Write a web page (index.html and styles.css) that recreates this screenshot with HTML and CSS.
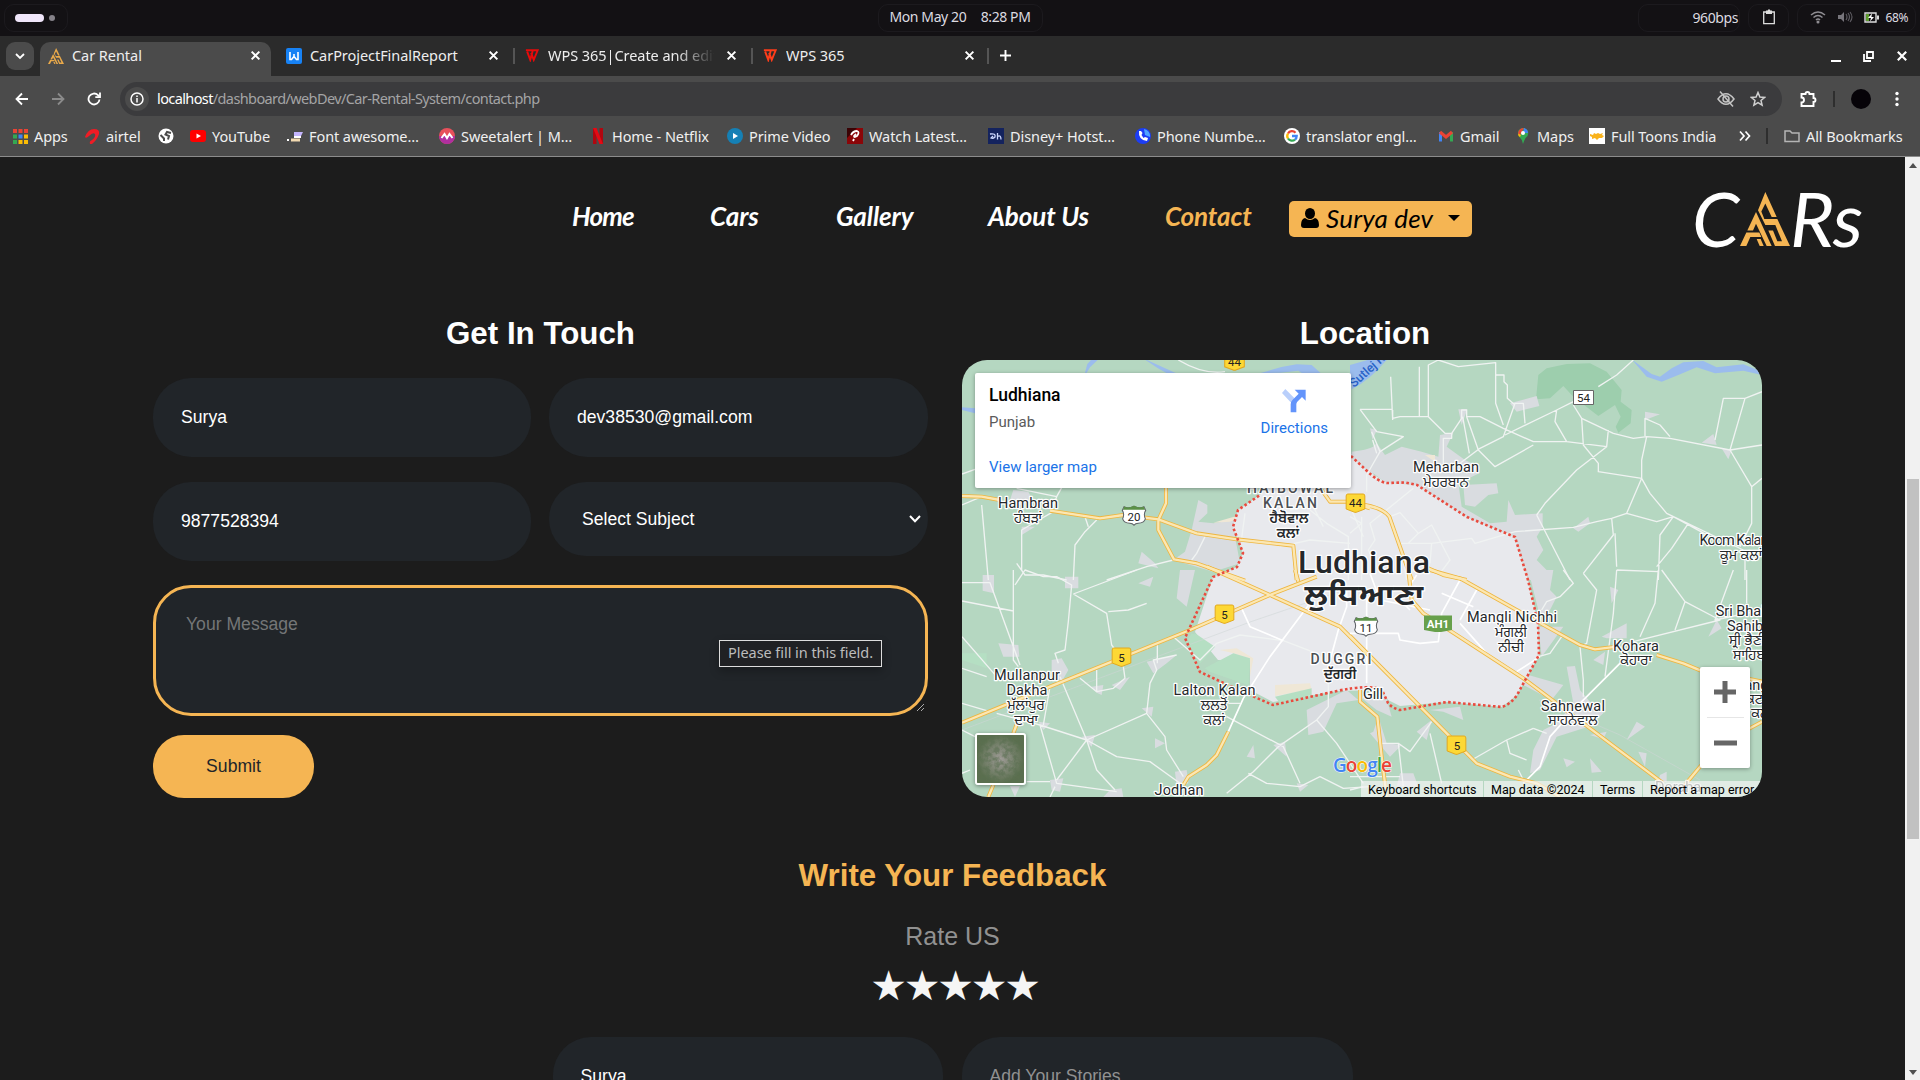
FILE: index.html
```html
<!DOCTYPE html>
<html lang="en">
<head>
<meta charset="utf-8">
<title>Car Rental</title>
<link rel="stylesheet" href="styles.css">
</head>
<body>
<svg class="defs" width="0" height="0">
  <defs>
    <symbol id="brand" viewBox="150 36 150 160" preserveAspectRatio="none">
      <path d="M226 36L260 110H245L226 70L214 94L223 116H262L300 196H255L235 150H249L262 182H276L256 134H226L204 90Z"/>
      <path d="M198 95L245 196H230L198 130L189 150H172Z"/>
      <path d="M169 156H208L214 169H181L169 196H150Z"/>
      <path d="M200 175H212L221 196H209Z"/>
    </symbol>
    <symbol id="x" viewBox="0 0 10 10"><path d="M1.5 1.5L8.5 8.5M8.5 1.5L1.5 8.5" fill="none" stroke="#fff" stroke-width="1.8"/></symbol>
    <symbol id="wps" viewBox="0 0 16 14"><path d="M1 1H9L6 12L2.5 2.5M7 4L10 12L14.5 1H10" fill="none" stroke="currentColor" stroke-width="2.2"/></symbol>
    <symbol id="us" viewBox="0 0 72 62"><path d="M8 8Q20 14 36 6Q52 14 64 8L69 18Q62 28 68 42Q64 54 48 54Q40 54 36 60Q32 54 24 54Q8 54 4 42Q10 28 3 18Z" fill="#fff" stroke="#5f6368" stroke-width="3"/><path d="M9 7Q20 13 36 5Q52 13 63 7L67 16H5Z" fill="#5b9147"/></symbol>
    <symbol id="nh" viewBox="0 0 60 60"><path d="M7 3H53Q58 3 58 9V48L32 58H28L2 48V9Q2 3 7 3Z" fill="#fdd835" stroke="#e2a81f" stroke-width="3"/></symbol>
  </defs>
</svg>

<header class="sysbar">
  <div class="pill work"><i class="dash"></i><i class="dot"></i></div>
  <div class="pill clock"><span>Mon May 20</span><span>8:28 PM</span></div>
  <div class="tray">
    <div class="pill net">960bps</div>
    <div class="pill clip"><svg width="14" height="16" viewBox="0 0 14 16"><path d="M1.7 3H12.3V14.7H1.7Z" fill="none" stroke="#ddd" stroke-width="1.3"/><path d="M4 1.5H5.5L7 0L8.5 1.5H10V5H4Z" fill="#ddd"/></svg></div>
    <div class="pill status">
      <svg width="16" height="14" viewBox="0 0 16 14" fill="none" stroke="#8f8d92" stroke-width="1.5"><path d="M1 5Q8-1 15 5M3.5 7.5Q8 3.5 12.5 7.5M6 10Q8 8 10 10"/><circle cx="8" cy="12" r=".8"/></svg>
      <svg width="16" height="14" viewBox="0 0 16 14"><path d="M1 5H4L7 2V12L4 9H1Z" fill="#77757b"/><path d="M9 4Q11 7 9 10M11 3Q14 7 11 11M13 2Q17 7 13 12" fill="none" stroke="#5f5d63" stroke-width="1.1"/></svg>
      <span class="batt"><svg width="15" height="11" viewBox="0 0 15 11"><path d="M1 1H12V10H1Z" fill="none" stroke="#ddd" stroke-width="1.4"/><path d="M13 3.5H15V7.5H13Z" fill="#ddd"/><path d="M2 2H5V9H2Z" fill="#5c9a2d"/><path d="M8 1.5L4 6H7L6 9.5L10 5H7.4Z" fill="#fff"/></svg>68%</span>
    </div>
  </div>
</header>

<div class="tabstrip">
  <span class="tabsearch"><svg width="10" height="7" viewBox="0 0 10 7"><path d="M1 1L5 5L9 1" fill="none" stroke="#fff" stroke-width="1.8"/></svg></span>
  <div class="tab active"><svg class="fav" fill="#e9a94a"><use href="#brand"/></svg><span class="title">Car Rental</span><svg class="close"><use href="#x"/></svg></div>
  <div class="tab"><svg class="fav" viewBox="0 0 16 16"><rect width="16" height="16" rx="2" fill="#1782f5"/><path d="M4 4V11.5H5.5L8 8.5L10.5 11.5H12V4M8 8V6" fill="none" stroke="#fff" stroke-width="1.6"/></svg><span class="title">CarProjectFinalReport</span><svg class="close"><use href="#x"/></svg></div>
  <div class="tab sep"><svg class="fav wps red"><use href="#wps"/></svg><span class="title fade">WPS 365|Create and edit</span><svg class="close"><use href="#x"/></svg></div>
  <div class="tab sep"><svg class="fav wps orange"><use href="#wps"/></svg><span class="title">WPS 365</span><svg class="close"><use href="#x"/></svg></div>
  <div class="newtab"><svg width="11" height="11" viewBox="0 0 11 11"><path d="M5.5 0V11M0 5.5H11" stroke="#fff" stroke-width="1.9"/></svg></div>
  <div class="winctl">
    <svg width="10" height="12" viewBox="0 0 10 12"><path d="M0 11H10" stroke="#fff" stroke-width="2"/></svg>
    <svg width="11" height="11" viewBox="0 0 11 11" fill="none" stroke="#fff" stroke-width="1.8"><path d="M4 1H10V7H4Z"/><path d="M1 3V10H8"/></svg>
    <svg width="12" height="12"><use href="#x"/></svg>
  </div>
</div>

<div class="toolbar">
  <svg width="14" height="14" viewBox="0 0 14 14" fill="none" stroke="#fff" stroke-width="1.8"><path d="M13 7H2M7 1.5L1.5 7L7 12.5"/></svg>
  <svg width="14" height="14" viewBox="0 0 14 14" fill="none" stroke="#8b8b8b" stroke-width="1.8"><path d="M1 7H12M7 1.5L12.500 7L7 12.500"/></svg>
  <svg width="14" height="14" viewBox="0 0 14 14" fill="none" stroke="#fff" stroke-width="1.8"><path d="M12.500 7.500A5.500 5.500 0 1 1 11 3.200L12 4.500"/><path d="M13 .5V5.200H8.300"/></svg>
  <div class="omnibox">
    <span class="info"><svg width="14" height="14" viewBox="0 0 14 14"><circle cx="7" cy="7" r="6" fill="none" stroke="#fff" stroke-width="1.5"/><path d="M7 6V10.500M7 3.400V5" stroke="#fff" stroke-width="1.500"/></svg></span>
    <span class="url">localhost<em>/dashboard/webDev/Car-Rental-System/contact.php</em></span>
    <svg class="eye" width="18" height="16" viewBox="0 0 18 16" fill="none" stroke="#c4c4c4" stroke-width="1.500"><path d="M1 8Q9-2.500 17 8Q9 18.500 1 8Z"/><circle cx="9" cy="8" r="3"/><path d="M3 .5L16 15.500"/></svg>
    <svg class="star" width="16" height="16" viewBox="0 0 16 16"><path d="M8 1.500L9.900 6L14.700 6.400L11 9.500L12.100 14.200L8 11.700L3.900 14.200L5 9.500L1.300 6.400L6.100 6Z" fill="none" stroke="#d0d0d0" stroke-width="1.500"/></svg>
  </div>
  <svg class="puzzle" width="17" height="18" viewBox="0 0 17 18"><path d="M1.500 4H5.500A2 2 0 0 1 9.500 4H13.500V8A2 2 0 0 1 13.500 12V16H1.500V12.500A2.500 2.500 0 0 0 1.500 7.500Z" fill="none" stroke="#fff" stroke-width="1.900"/></svg>
  <i class="bar"></i><i class="avatar"></i>
  <svg class="dots" width="4" height="16" viewBox="0 0 4 16" fill="#fff"><circle cx="2" cy="2.500" r="1.700"/><circle cx="2" cy="8" r="1.700"/><circle cx="2" cy="13.500" r="1.700"/></svg>
</div>

<nav class="bookmarks">
  <a><svg viewBox="0 0 16 16"><path d="M1 1h4v4H1zM6.500 1h4v4h-4zM12 1h4v4h-4z" fill="#ea4335"/><path d="M1 6.500h4v4H1zM1 12h4v4H1z" fill="#34a853"/><path d="M6.500 6.500h4v4h-4z" fill="#4285f4"/><path d="M12 6.500h4v4h-4zM6.500 12h4v4h-4zM12 12h4v4h-4z" fill="#fbbc05"/></svg>Apps</a>
  <a><svg viewBox="0 0 16 16"><path d="M1 9Q4 1 10 1Q16 1 15 6Q13 12 8 16H6Q5 13 8 12Q12 9 11 6Q9 4 5 8Q2 11 1 9Z" fill="#ee1c25"/></svg>airtel</a>
  <a><svg viewBox="0 0 16 16"><circle cx="8" cy="8" r="7.500" fill="#fff"/><path d="M2.500 7L6 10.500V13M13 5L9 4L7.500 6.500L11 8L10 11.500" fill="none" stroke="#4b4b4b" stroke-width="2"/></svg></a>
  <a><svg viewBox="0 0 16 16"><rect y="2" width="16" height="12" rx="3" fill="#f00"/><path d="M6.500 5.500L11 8L6.500 10.500Z" fill="#fff"/></svg>YouTube</a>
  <a><svg viewBox="0 0 16 16"><path d="M7 4H16L14 8H7Z" fill="#c4b5fd"/><path d="M7 8H14V10H7Z" fill="#fff"/><path d="M4 10.500H13V13.500H4Z" fill="#f1d9b0"/><path d="M0 11H2V13H0Z" fill="#fff"/></svg>Font awesome…</a>
  <a><svg viewBox="0 0 16 16"><circle cx="8" cy="8" r="8" fill="#e8505b"/><path d="M0 8A8 8 0 0 0 16 8Z" fill="#b02fa0"/><path d="M2.500 10L5.500 6L8 10L10.500 6L13.500 10" fill="none" stroke="#fff" stroke-width="2"/></svg>Sweetalert | M…</a>
  <a><svg class="narrow" viewBox="0 0 10 16"><path d="M0 0H3.500V16H0ZM6.500 0H10V16H6.500Z" fill="#b1060f"/><path d="M0 0H3.500L10 16H6.500Z" fill="#e50914"/></svg>Home - Netflix</a>
  <a><svg viewBox="0 0 16 16"><circle cx="8" cy="8" r="8" fill="#1580b5"/><path d="M6 5L11 8L6 11Z" fill="#fff"/></svg>Prime Video</a>
  <a><svg viewBox="0 0 16 16"><path d="M0 0H16V16H0Z" fill="#8b0508"/><path d="M0 0H10L0 10Z" fill="#3a0305"/><path d="M4 7Q6 3 10 3Q13 4 10 8Q7 10 7 8L9 6M7 11L6 13" fill="none" stroke="#fff" stroke-width="1.800"/></svg>Watch Latest…</a>
  <a><svg viewBox="0 0 16 16"><path d="M0 0H16V16H0Z" fill="#14235e"/><path d="M2 6Q8 5 7 9Q5 11 3 10L5 8M9.500 5V11.500M9.500 8.500Q13 6.500 13 11.500" fill="none" stroke="#cdd8ff" stroke-width="1.300"/></svg>Disney+ Hotst…</a>
  <a><svg viewBox="0 0 16 16"><circle cx="8" cy="8" r="8" fill="#1c3df5"/><path d="M9 1A7 7 0 0 1 15 9L10 7Z" fill="#4fa4ff"/><path d="M4 3Q3 12 12 13L13 10L10 9L8.500 10L6.500 7L7.500 5L6 3Z" fill="#fff"/></svg>Phone Numbe…</a>
  <a><svg viewBox="0 0 16 16"><circle cx="8" cy="8" r="8" fill="#fff"/><g fill="none" stroke-width="2.300"><path d="M4 5.500A4.700 4.700 0 0 1 11.500 4.700" stroke="#ea4335"/><path d="M4 5.500A4.700 4.700 0 0 0 4 10.500" stroke="#fbbc05"/><path d="M4 10.500A4.700 4.700 0 0 0 11 11.600" stroke="#34a853"/><path d="M8 8H12.700Q12.700 10.500 11 11.600" stroke="#4285f4"/></g></svg>translator engl…</a>
  <a><svg viewBox="0 0 16 16"><path d="M2.500 13.500V4" stroke="#4285f4" stroke-width="3"/><path d="M13.500 13.500V4" stroke="#34a853" stroke-width="3"/><path d="M2 4L8 9L14 4" fill="none" stroke="#ea4335" stroke-width="3.200"/></svg>Gmail</a>
  <a><svg viewBox="0 0 16 16"><path d="M8 16Q7 11 4 8.500Q1 3 6 .5Q10-1 13 3Q14 7 11 9.500Q9 12 8 16Z" fill="#34a853"/><path d="M3 5Q4 0 9 0L4.500 8Z" fill="#ea4335"/><path d="M9 0Q13 1 13 5L8 5Z" fill="#4285f4"/><path d="M3 5.500L6 7L5 9Q3 8 3 5.500Z" fill="#fbbc05"/><circle cx="8" cy="5" r="2" fill="#fff"/></svg>Maps</a>
  <a><svg viewBox="0 0 16 16"><path d="M0 0H16V16H0Z" fill="#fff"/><path d="M1 6L4 7L5 5L7 6L9 5L11 6L14 5L13 7L15 8L13 10L10 10L8 12L6 10L3 11L3 9L1 8Z" fill="#f9b21b"/></svg>Full Toons India</a>
  <a class="more"><svg viewBox="0 0 12 12"><path d="M1 1.500L5 6L1 10.500M6.500 1.500L10.500 6L6.500 10.500" fill="none" stroke="#fff" stroke-width="1.700"/></svg></a>
  <i class="bar"></i>
  <a><svg viewBox="0 0 16 16"><path d="M1 3H6L8 5H15V13.500H1Z" fill="none" stroke="#b5b5b5" stroke-width="1.500"/></svg>All Bookmarks</a>
</nav>

<main class="viewport">
  <div class="page">
    <div class="nav">
      <a>Home</a><a>Cars</a><a>Gallery</a><a>About Us</a><a class="current">Contact</a>
      <button class="user"><svg width="18" height="20" viewBox="0 0 18 20"><ellipse cx="9" cy="5.500" rx="5" ry="5.500"/><path d="M4 10Q9 14 14 10Q18 11 18 17Q18 20 15 20H3Q0 20 0 17Q0 11 4 10Z"/></svg><span>Surya dev</span><i class="caret"></i></button>
      <div class="logo"><span class="c">C</span><svg width="50" height="54" fill="#f5b553"><use href="#brand"/></svg><span class="rs">Rs</span></div>
    </div>

    <section class="contact">
      <div class="form">
        <h2>Get In Touch</h2>
        <div class="fields">
          <div class="field">Surya</div><div class="field">dev38530@gmail.com</div>
          <div class="field">9877528394</div>
          <div class="field select"><span>Select Subject</span><svg width="12" height="8" viewBox="0 0 12 8"><path d="M1 1L6 6.300L11 1" fill="none" stroke="#fff" stroke-width="2"/></svg></div>
        </div>
        <div class="message">Your Message
          <span class="tip">Please fill in this field.</span>
          <svg class="grip" width="7" height="7" viewBox="0 0 7 7"><path d="M0 7L7 0M4 7L7 4" stroke="#aaa"/></svg>
        </div>
        <button class="submit">Submit</button>
      </div>
      <div class="location">
        <h2>Location</h2>
        <div class="map">
          <svg class="canvas" width="800" height="437" viewBox="962 360 800 437">
            <rect x="962" y="360" width="800" height="437" fill="#b5d7c1"/>
            <g class="q0">
              <path class="river" d="M405 68L412 42L425 28H445L420 52L410 68ZM36 172L75 175V190L36 180ZM580 25L690 75H660Q620 55 580 25ZM930 70Q990 50 1040 43L1085 45L1115 72H1060L1045 62L990 68ZM1205 110L1200 72L1260 30H1310Q1260 90 1205 118Z"/>
              <path class="gray" d="M745 450L772 465V490L745 515L790 520L855 510V560L870 640L790 665L670 630L705 605L725 540ZM575 605L615 640L625 655L565 640ZM190 420L235 425L245 445L220 465H190L180 450ZM215 530H255L215 555ZM1205 305Q1250 300 1270 290V420H1205Z"/>
              <path class="sand" d="M790 518L860 498L880 470V500L840 515Z"/>
            </g>
            <g class="q1">
              <path class="river" d="M0 75L100 28H60L0 45ZM845 28L905 72L930 80L965 55L1000 37L1060 33L1100 52L1180 43L1236 65V75L1180 62L1095 70L1040 52L985 75L935 95L890 80Z"/>
              <path class="wood" d="M565 75L590 55L650 42L720 40L770 65L815 120L812 155L845 180L842 220L805 248L797 230L812 200L795 165L745 198L670 140L640 108L600 145L558 148Z"/>
              <path class="gray" d="M0 312L50 310L80 280L105 315L155 290L215 305L265 320L270 255L310 248L290 290L345 330L388 350V370L325 400L335 470L420 520L470 515L475 450L495 495L578 490V530L560 560L580 600L560 630L595 665L590 690H535L495 560L350 500L200 405L110 400L0 318ZM340 405L440 400L445 430L415 435L375 470L345 465ZM480 160L560 138L568 168L500 185ZM885 185L930 193L885 210ZM1055 278L1090 252L1100 285ZM670 535L715 500L720 520L685 545ZM325 178H352L335 225ZM60 235L80 240L68 270ZM1115 295L1145 300L1135 328Z"/>
              <path class="sand" d="M225 315H255V335ZM280 500L330 490L320 515L330 532Z"/>
            </g>
            <g class="q2">
              <path class="gray" d="M680 85L690 0H735L710 110ZM98 15H132V70L98 62ZM345 20H385V55H345ZM145 220L205 225L208 260H160ZM305 270L335 265L355 300L335 335L305 310ZM590 275L680 255L650 280L610 310ZM425 350L460 345L455 375L440 368ZM485 345L540 320L510 360ZM575 415L610 410L605 440ZM675 605L710 600L715 640L680 650ZM615 505L645 520L615 535ZM890 560L910 525L915 565ZM970 525L1005 515L1010 560ZM1070 420L1190 360L1225 390L1160 400L1120 485L1075 495ZM300 630L340 625L330 665L305 660ZM395 500L435 495L425 530ZM265 455L300 460L280 480ZM180 648H210L195 681ZM480 660L515 655L520 681H460ZM1040 640L1075 645L1050 665ZM565 40L610 20L600 50Z"/>
              <path class="wood2" d="M768 120H830V150L770 140ZM725 190L795 230L750 280L710 215ZM765 295L850 250L900 265L895 345L780 305ZM970 375L1085 355V380L990 400ZM36 250L110 250V295L36 270Z"/>
            </g>
            <g class="q3">
              <path class="gray" d="M535 0H610L600 60L620 80L600 120L570 140ZM755 200L830 160L830 205L770 205ZM650 290L675 288L690 360L720 395L760 430L715 470L620 500L570 600L540 610L550 540L580 480L620 460L670 400ZM500 305L640 345L605 390L520 345ZM565 170H640L575 260ZM30 380L105 370L125 440L80 420ZM70 485L85 440L110 520L155 525L120 560L60 490ZM200 485L245 450L230 510ZM240 420L330 410L340 450L280 425ZM780 50L805 60L785 100ZM1075 200L1100 150L1115 175ZM830 510L860 455L885 470ZM640 565L675 575L650 592ZM720 565L755 605L725 608ZM865 545L890 550L885 590ZM150 610H190L205 650H140ZM930 615L950 605V635H925ZM730 270L765 245L760 285ZM720 495L770 485L760 508Z"/>
              <path class="wood2" d="M170 395L245 372L250 400L200 415Z"/>
            </g>
            <path class="city" d="M1260 495L1300 450L1350 456L1366 470L1387 483L1417 485L1467 517L1515 537L1528 580L1538 623L1539 655L1517 695L1502 707L1447 702L1400 706L1388 700L1382 690L1337 691L1273 702L1250 690V660L1218 660L1195 632L1213 577L1237 567L1243 553L1233 527L1238 510Z"/>
            <g class="q2">
              <path class="sand" d="M810 240L860 235L910 265L900 320L900 265L850 250ZM975 345L1080 340L1085 358L975 378Z"/>
              <path class="wood2" d="M735 190L795 230L750 280L715 215ZM765 295L850 250L900 265L895 345L780 305ZM975 380L1085 355V375L990 400Z"/>
            </g>

            <g class="rail">
              <path d="M962 730L1100 678L1250 622L1350 588M1539 700L1620 735L1700 780"/>
            </g>
            <g class="q0 road">
              <path d="M95 465L115 690M36 465L95 440M36 372L75 358M310 485L215 540V660M200 415L320 440L335 413M320 440L305 480M440 510L405 545L375 585L370 690M405 500L415 530M200 640L225 675L280 675L350 690M470 690L590 650L670 630M765 560L740 610L725 630M685 30Q760 75 825 65M885 490L875 565M990 590L1080 570L1200 580M1080 480L1130 520L1195 560V690M1020 480L1090 470L1120 530M1205 480L1240 560"/>
            </g>
            <g class="q1 road">
              <path d="M122 80L128 210M30 178H128M30 178L80 245L160 260L90 305L50 375V425M128 180V205L150 200H235L235 45L265 30L325 50L437 38V160L460 225M208 50V200M235 200L285 250H305V265H280V340M305 250L335 205V180H350V200H390L460 235L550 275H650L770 290L775 240M338 200L358 310M350 200L385 300L435 350L550 285M330 340L390 295L460 260L495 160H520L525 220M437 75H462V95L472 105V145L495 165M465 255L620 180L670 155M620 180L615 215L650 275M670 165L695 205L700 285L745 340V365L875 385L900 430L950 490L1180 600M695 205L790 250L850 265L890 260L960 265L1140 300L1236 285M885 258V205L930 225L960 260M890 260L875 330V385L830 490M770 290L680 360L585 460L560 495M495 545L670 532L740 515L785 505L830 490L920 515L970 500L1080 560M560 495L660 690M785 505L790 555L700 670M795 550L800 650M970 500L930 555L925 690M1015 520L965 595L920 650M1095 270L1120 145H1185L1236 125M1185 145L1140 300L1205 410L1236 385M1205 410L1205 520L1170 590M1185 600V690M850 30L800 75L745 110M90 305L65 245M68 270L80 310"/>
              <path d="M170 690L150 580L245 580L365 565L375 580L495 545M190 415L60 520L75 570L55 600L75 640M120 500L150 488L205 550L175 580M205 550L245 525L300 630L270 670M35 500V690M0 500L35 520L0 550M245 580L240 640"/>
            </g>
            <g class="q2 road">
              <path d="M36 38H120L210 285M190 0V270L205 290M195 45L225 0L280 20H320L365 45L355 155L345 240L315 250L325 280M370 72L470 130L485 225L500 245M370 72L560 0M475 125L535 120L590 100M36 93L190 123M36 200L140 320M36 295L110 320M330 320L410 510L320 630M270 465L410 510L500 560L600 575L690 640M140 430L270 465L320 640L500 665M300 350L280 465M410 510L590 430L600 340L620 300L610 270L680 255M590 430L645 500L650 540L700 620M390 325L440 365L490 355L525 325L520 290M440 365V300M622 280V220M670 200L750 270L800 220L870 195L1000 212L1100 250M830 670L910 605L985 530L1100 450L1135 410V330M895 610L950 640L1050 650L1110 620L1180 655L1260 650M830 440L1000 530L1050 640M1100 450L1160 520L1240 640M36 480L75 500M36 610L60 600M230 635H300M36 400L120 425M835 400H870M410 510L440 600L495 660M315 650L300 681"/>
              <path class="wide" d="M835 485L880 385L960 260L1080 100M875 115L900 170L1000 212M1190 50V110L1165 180L1135 290V340"/>
            </g>
            <g class="q3 road">
              <path d="M640 0L670 40L630 80L590 95L575 120M700 10L740 60L710 220L690 230L700 330V380M800 0L790 130L765 320M925 0L915 100L870 200M935 0L1005 95L975 180M1005 95L1110 150L850 215M1150 0L1095 150L1236 120M1190 0V100M635 200L600 250L565 260M550 475L590 490M550 475L470 510L365 570M470 510L480 550L530 570M505 600L520 630M95 520H145L180 545L245 455M145 520L160 650M240 490L275 640M0 620H150M0 660L40 650M800 0L925 5"/>
              <path class="wide" d="M830 260L690 400L600 500L570 590L520 640M330 160L410 250M200 15L150 90L180 120M50 65V310M0 190H145L150 210L210 220L265 215L275 130L330 30M275 70L370 110M380 60L330 150M500 305L570 260M60 10L90 90L240 120M50 210V340"/>
            </g>

            <g class="hwc">
              <g class="q0"><path id="ya" d="M36 438L95 440L150 450M300 482L450 505L520 495L625 508L740 550L860 568L1030 587L1040 690M648 413V460L625 510V540L672 628L740 640L885 692M1110 413L1140 455H1200L1260 475"/></g>
              <g class="q1"><path id="yb" d="M0 460L45 465Q100 475 118 500L185 690M235 655L280 675L350 690"/></g>
              <g class="q2"><path id="yc" d="M770 -10L960 75L1170 170L1260 260M36 458L300 350L720 180L960 75L1100 20M1035 0L1045 35M190 490L205 450M115 681L130 645M835 485L800 555L770 585L715 620L700 645"/></g>
              <g class="q3"><path id="yd" d="M0 198L300 500L380 580L480 620L560 640L630 681M175 0L185 90L220 130L520 325L940 640M240 0L330 25L500 120L690 225L735 238L800 230M920 255L1000 280L1060 305M1236 455L1180 485L1050 590L1000 650M30 360V395L82 440L95 560L110 681M1190 325L1236 335"/></g>
            </g>
            <g class="hwf">
              <g class="q0"><use href="#ya"/></g><g class="q1"><use href="#yb"/></g><g class="q2"><use href="#yc"/></g><g class="q3"><use href="#yd"/></g>
            </g>
            <path class="border" d="M1351 456L1366 470Q1378 482 1387 483L1405 482.500L1417 485L1467 517L1515 537L1528 580L1538 623L1539 655L1517 695Q1511 704 1502 707L1447 702L1400 710Q1392 708 1388 703L1382 690Q1370 684 1337 691L1273 705L1243 692L1200 672L1185 638L1213 577L1237 567L1243 553L1233 527L1238 510L1260 495"/>

            <g class="shields">
              <use href="#us" x="1121" y="504" width="26" height="22"/><text x="1134" y="520.500">20</text>
              <use href="#us" x="1353" y="615" width="26" height="22"/><text x="1366" y="631.500">11</text>
              <use href="#nh" x="1224" y="350" width="21" height="21"/><text x="1234.500" y="366">44</text>
              <use href="#nh" x="1345" y="493" width="21" height="20"/><text x="1355.500" y="507">44</text>
              <use href="#nh" x="1214" y="604" width="21" height="20"/><text x="1224.500" y="619">5</text>
              <use href="#nh" x="1111" y="647" width="21" height="20"/><text x="1121.500" y="662">5</text>
              <use href="#nh" x="1446" y="735" width="21" height="20"/><text x="1457" y="750">5</text>
              <path d="M1573.500 390.500H1593.500V404.500H1573.500Z" fill="#fff" stroke="#666"/><text x="1583.500" y="401.500">54</text>
              <path d="M1424 615.500H1452V630L1441 632H1435L1424 630Z" fill="#67a04b"/><text class="ah" x="1438" y="628">AH1</text>
            </g>
            <text class="riverlabel" transform="translate(1354 388) rotate(-42)">Sutlej River</text>
            <g class="labels">
              <text x="1028" y="508" textLength="60">Hambran</text><text class="pa" x="1028" y="523">ਹੰਬੜਾਂ</text>
              <text class="sp" x="1290" y="493" textLength="86">HAIBOWAL</text><text class="sp" x="1290" y="508" textLength="54">KALAN</text><text class="pa b" x="1289" y="523">ਹੈਬੋਵਾਲ</text><text class="pa b" x="1288" y="538">ਕਲਾਂ</text>
              <text x="1446" y="471.500" textLength="66">Meharban</text><text class="pa" x="1446" y="487">ਮੇਹਰਬਾਨ</text>
              <text x="1734" y="545" textLength="69">Koom Kalan</text><text class="pa" x="1741" y="560">ਕੂਮ ਕਲਾਂ</text>
              <text class="big" x="1364" y="573" textLength="132">Ludhiana</text><text class="big pal" x="1364" y="605" textLength="119" lengthAdjust="spacingAndGlyphs">ਲੁਧਿਆਣਾ</text>
              <text x="1512" y="622" textLength="90">Mangli Nichhi</text><text class="pa" x="1511" y="637">ਮੰਗਲੀ</text><text class="pa" x="1511" y="652">ਨੀਚੀ</text>
              <text x="1636" y="650.500" textLength="46">Kohara</text><text class="pa" x="1636" y="665">ਕੋਹਾਰਾ</text>
              <text x="1746" y="615.500">Sri Bhaini</text><text x="1745" y="630.500">Sahib</text><text class="pa" x="1747" y="645">ਸ੍ਰੀ ਭੈਣੀ</text><text class="pa" x="1749" y="660">ਸਾਹਿਬ</text>
              <text class="sp" x="1341" y="664" textLength="61">DUGGRI</text><text class="pa b" x="1340" y="679">ਦੁੱਗਰੀ</text>
              <text x="1373" y="699" textLength="20">Gill</text>
              <text x="1027" y="680" textLength="66">Mullanpur</text><text x="1027" y="695" textLength="41">Dakha</text><text class="pa" x="1026" y="710">ਮੁੱਲਾਂਪੁਰ</text><text class="pa" x="1026" y="725">ਦਾਖਾ</text>
              <text x="1214.500" y="695" textLength="82">Lalton Kalan</text><text class="pa" x="1214" y="710">ਲਲਤੋਂ</text><text class="pa" x="1214" y="725">ਕਲਾਂ</text>
              <text x="1573" y="710.500" textLength="64">Sahnewal</text><text class="pa" x="1573" y="725">ਸਾਹਨੇਵਾਲ</text>
              <text x="1179" y="795" textLength="49">Jodhan</text><text x="1678" y="792" opacity=".8">Doraha</text>
              <text x="1762" y="690">Sanghol</text><text class="pa" x="1762" y="704">ਕਟਾਣਾ</text><text class="pa" x="1762" y="718">ਕਲਾਂ</text>
            </g>
            <text class="google" x="1333" y="772" textLength="59"><tspan fill="#4285f4">G</tspan><tspan fill="#ea4335">o</tspan><tspan fill="#fbbc05">o</tspan><tspan fill="#4285f4">g</tspan><tspan fill="#34a853">l</tspan><tspan fill="#ea4335">e</tspan></text>
          </svg>
          <div class="place">
            <div class="info-text"><b>Ludhiana</b><span>Punjab</span><a>View larger map</a></div>
            <div class="dir"><svg width="24" height="24" viewBox="0 0 72 72"><path d="M0 12L10 0L36 26V50Z" fill="#b9cffb"/><path d="M26 70V46Q26 38 32 32L50 14L38 2H71V35L60 24L46 38Q43 41 43 46V70Z" fill="#6394fb"/></svg><a>Directions</a></div>
          </div>
          <div class="sat"><svg width="47" height="48" viewBox="0 0 47 48"><defs><filter id="noise"><feTurbulence type="fractalNoise" baseFrequency=".22" numOctaves="4" seed="4"/><feColorMatrix values="0 0 0 0 .1  0 0 0 0 .16  0 0 0 0 .08  3.200 0 0 0 -1.200"/></filter><radialGradient id="town"><stop stop-color="#a09c98"/><stop offset="1" stop-color="#5b6f4f"/></radialGradient></defs><rect width="47" height="48" fill="url(#town)"/><rect width="47" height="48" filter="url(#noise)" opacity=".6"/></svg></div>
          <div class="zoom"><svg width="24" height="24" viewBox="0 0 24 24"><path d="M12 1V23M1 12H23" stroke="#666" stroke-width="5"/></svg><hr><svg width="24" height="24" viewBox="0 0 24 24"><path d="M1 12H24" stroke="#666" stroke-width="5"/></svg></div>
          <div class="credits"><span>Keyboard shortcuts</span><span>Map data ©2024</span><span>Terms</span><span>Report a map error</span></div>
        </div>
      </div>
    </section>

    <section class="feedback">
      <h2>Write Your Feedback</h2>
      <p class="rate">Rate US</p>
      <div class="stars">★★★★★</div>
      <div class="row"><div class="field">Surya</div><div class="field hint">Add Your Stories</div></div>
    </section>
  </div>
  <div class="scrollbar"><i class="up"></i><i class="thumb"></i><i class="down"></i></div>
</main>
</body>
</html>
```
FILE: styles.css
```css
* { box-sizing: border-box; }
html, body { height: 100%; }
body { margin: 0; height: 1080px; overflow: hidden; display: flex; flex-direction: column; background: #1c1c1c; font-family: "Liberation Sans", Arial, sans-serif; }
svg { display: block; flex: none; }
.defs { position: absolute; }

/* desktop bar */
.sysbar { height: 36px; flex: none; background: #131114; color: #dddbe0; font: 14px "Noto Sans", sans-serif; letter-spacing: -.4px; display: grid; grid-template-columns: 1fr auto 1fr; align-items: center; padding: 4px; }
.pill { height: 28px; border: 1px solid #1c1a1e; border-radius: 10px; display: flex; align-items: center; padding-bottom: 2px; }
.work { width: 64px; padding: 0 0 0 10px; gap: 5px; }
.dash { width: 29px; height: 8px; border-radius: 4px; background: #f0e6fa; }
.dot { width: 6px; height: 6px; border-radius: 50%; background: #858289; }
.clock { width: 165px; justify-content: space-between; padding: 0 11px 3px; white-space: nowrap; }
.tray { display: flex; justify-content: flex-end; gap: 8px; }
.net { width: 102px; justify-content: flex-end; padding-right: 1px; }
.clip { width: 41px; justify-content: center; }
.status { width: 119px; padding: 0 7px 2px 12px; justify-content: space-between; font-size: 12px; }
.batt { display: flex; align-items: center; gap: 6px; }

/* browser tabs */
.tabstrip { height: 40px; flex: none; background: #2b2b2b; display: flex; align-items: flex-end; padding-left: 6px; font: 14.500px "Noto Sans", sans-serif; letter-spacing: -.05px; color: #eee; }
.tabsearch { width: 28px; height: 28px; border-radius: 9px; background: #4b4b4b; display: flex; align-items: center; justify-content: center; margin: 0 6px 6px 0; }
.tab { position: relative; width: 238px; height: 34px; padding: 0 17px 7px 8px; display: flex; align-items: center; gap: 8px; }
.tab.active { width: 231px; margin-right: 7px; padding-right: 10px; background: #4b4b4b; border-radius: 10px 10px 0 0; }
.tab.sep::before, .newtab::before { content: ""; position: absolute; left: -3px; top: 6px; width: 2px; height: 16px; background: #555; }
.fav { width: 16px; height: 16px; }
.wps { width: 14px; height: 13px; margin: 0 1px; }
.red { color: #e80a0a; }
.orange { color: #ff3d1a; }
.title { flex: 1; white-space: nowrap; overflow: hidden; line-height: 20px; margin-top: -1px; }
.fade { -webkit-mask: linear-gradient(90deg, #000 75%, transparent 98%); mask: linear-gradient(90deg, #000 75%, transparent 98%); }
.close { width: 11px; height: 11px; }
.newtab { position: relative; height: 34px; width: 40px; padding: 8px 0 0 8px; }
.newtab::before { left: -5px; }
.winctl { margin-left: auto; display: flex; gap: 22px; align-items: center; padding-right: 12px; height: 28px; margin-bottom: 6px; }

/* address row */
.toolbar { height: 41px; flex: none; background: #4b4b4b; display: flex; align-items: center; gap: 22px; padding: 5px 16px 0 15px; }
.omnibox { margin-left: -3px; width: 1662px; height: 34px; border-radius: 17px; background: #3b3b3d; display: flex; align-items: center; padding: 0 16px 0 5px; }
.info { width: 24px; height: 24px; border-radius: 12px; background: #4b4b4b; display: flex; align-items: center; justify-content: center; margin-right: 8px; }
.url { flex: 1; font: 14.500px/20px "Noto Sans", sans-serif; letter-spacing: -.61px; color: #fff; margin-top: -2px; }
.url em { font-style: normal; color: #a4a4a5; }
.eye { margin-right: 15px; }
.puzzle { margin-left: -4px; }
.bar { width: 2px; height: 16px; background: #2e2e2e; }
.toolbar .bar { margin: 0 -6px; }
.avatar { width: 20px; height: 20px; border-radius: 50%; background: #060308; }
.dots { margin-left: 2px; }

/* bookmarks */
.bookmarks { height: 40px; flex: none; background: #4b4b4b; border-bottom: 1px solid #8c8c8c; display: grid; align-items: center; padding: 0 0 2px 12px; grid-template-columns: 72px 74px 32px 97px 152px 153px 135px 120px 141px 147px 149px 154px 77px 74px 150px 27px 18px 1fr; font: 14.500px/20px "Noto Sans", sans-serif; letter-spacing: -.08px; color: #f0f0f0; }
.bookmarks a { display: flex; align-items: center; gap: 6px; white-space: nowrap; }
.bookmarks svg { width: 16px; height: 16px; }
.bookmarks svg.narrow { width: 10px; margin: 0 3px 0 1px; }
.bookmarks .more svg { width: 12px; height: 12px; }

/* page */
.viewport { flex: 1; display: flex; background: #1c1c1c; overflow: hidden; min-height: 0; }
.page { width: 1905px; height: 923px; overflow: hidden; }
.nav { height: 122px; display: flex; padding: 44px 41px 0 572px; font: italic 700 26px Lato, "DejaVu Sans", sans-serif; color: #fff; align-items: flex-start; white-space: nowrap; }
.nav a { line-height: 32px; letter-spacing: -.1px; margin-top: -1px; }
.nav a:nth-child(1) { width: 138px; letter-spacing: -.8px; }
.nav a:nth-child(2) { width: 126px; }
.nav a:nth-child(3) { width: 152px; }
.nav a:nth-child(4) { width: 177px; }
.nav a:nth-child(5) { width: 124px; }
.current { color: #f5b553; }
.user { width: 183px; height: 36px; border: 0; border-radius: 5px; background: #f5b553; padding: 0 12px 2px 12px; display: flex; align-items: center; gap: 7px; font: italic 400 26px Lato, sans-serif; color: #000; }
.user span { flex: 1; text-align: left; letter-spacing: .2px; }
.caret { border: 6px solid transparent; border-top-color: #000; border-bottom: 0; }
.logo { display: flex; margin-left: auto; font: italic 400 76px/74px Lato, sans-serif; align-items: flex-end; height: 74px; margin-top: -20px; }
.logo .c { width: 45px; margin-left: -3px; margin-right: 3px; letter-spacing: -2px; }
.logo .rs { width: 74px; letter-spacing: -1px; }
.logo svg { margin-bottom: 9px; }
h2 { margin: 0; font-size: 31.300px; line-height: 38px; font-weight: 700; color: #fff; text-align: center; }
.contact { display: flex; gap: 34px; padding: 36px 0 0 153px; height: 535px; }
.form { width: 775px; }
.fields { margin-top: 25px; display: grid; grid-template-columns: 378px 379px; gap: 25px 18px; height: 182px; align-items: start; }
.field { height: 79px; border-radius: 38px; background: #212529; color: #fff; font-size: 17.600px; padding: 0 28px; display: flex; align-items: center; }
.select { height: 74px; padding: 0 7px 0 33px; justify-content: space-between; }
.message { position: relative; margin-top: 25px; height: 131px; border: 3px solid #f5b553; border-radius: 38px; background: #212529; color: #747677; font-size: 17.600px; padding: 26px 30px; }
.tip { position: absolute; left: 563px; top: 52px; width: 163px; height: 27px; border: 1px solid #ddd; background: #202124; color: #bcbcbc; font: 14.500px/22px "Noto Sans", sans-serif; letter-spacing: -.05px; text-align: center; white-space: nowrap; box-shadow: 0 4px 10px #0004; }
.grip { position: absolute; right: 1px; bottom: 2px; }
.submit { display: block; margin-top: 19px; width: 161px; height: 63px; border: 0; border-radius: 31px; background: #f5b553; color: #212529; font: 17.600px "Liberation Sans", sans-serif; }
.location { width: 800px; }
.location h2 { width: 806px; }

/* map */
.map { position: relative; margin-top: 7px; width: 800px; height: 437px; border-radius: 25px; overflow: hidden; font-family: Roboto, sans-serif; }
.q0 { transform: translate(950px, 350px) scale(.33333); }
.q1 { transform: translate(1350px, 350px) scale(.33333); }
.q2 { transform: translate(950px, 570px) scale(.33333); }
.q3 { transform: translate(1350px, 570px) scale(.33333); }
.river { fill: #9bbced; }
.gray { fill: #d9dce0; }
.wood { fill: #9dcead; }
.wood2 { fill: #b5dfc3; }
.sand { fill: #efe7d6; }
.city { fill: #e8e9ed; }
.rail path { fill: none; stroke: #cfd6d6; stroke-width: .8; opacity: .7; }
.road path { fill: none; stroke: #f0f3f2; stroke-width: 4; stroke-linejoin: round; }
.road .wide { stroke: #fff; stroke-width: 5; }
.hwc { fill: none; stroke: #eeb640; stroke-width: 12; stroke-linejoin: round; }
.hwf { fill: none; stroke: #fbe7b3; stroke-width: 7; stroke-linejoin: round; }
.border { fill: none; stroke: #e94b3f; stroke-width: 2.600; stroke-dasharray: 2.600 2.400; }
.shields text { font: 11.500px Roboto, sans-serif; text-anchor: middle; fill: #222; }
.shields .ah { font-weight: 700; fill: #fff; }
.riverlabel { font: 500 12.500px Roboto, sans-serif; fill: #2862c7; }
.labels { font: 14.500px Roboto, sans-serif; fill: #25282b; text-anchor: middle; stroke: #fff; stroke-width: 2.500px; paint-order: stroke; stroke-linejoin: round; }
.labels .sp { font-size: 14px; font-weight: 500; fill: #4b4f54; }
.labels .pa { font: 14px "Noto Sans Gurmukhi", "Noto Sans", sans-serif; }
.labels .pa.b { font-weight: 600; }
.labels .big { font: 500 32px Roboto, sans-serif; }
.labels .pal { font: 700 29px "Noto Sans Gurmukhi", "Noto Sans", sans-serif; }
.google { font: 600 19px "Open Sans", sans-serif; stroke: #fff; stroke-width: 1px; paint-order: stroke; }
.place { position: absolute; left: 13px; top: 13px; width: 376px; height: 115px; background: #fff; border-radius: 2px; box-shadow: 0 1px 4px #0005; padding: 12px 23px 11px 14px; display: flex; justify-content: space-between; font-size: 15px; }
.info-text { display: flex; flex-direction: column; }
.info-text b { font-size: 17.500px; font-weight: 500; line-height: 20px; color: #000; }
.info-text span { margin-top: 8px; line-height: 18px; color: #5b5b5b; }
.place a { color: #1a73e8; }
.info-text a { margin-top: auto; line-height: 20px; }
.dir { display: flex; flex-direction: column; align-items: center; gap: 5px; padding-top: 4px; }
.dir a { line-height: 20px; }
.sat { position: absolute; left: 13px; bottom: 12px; width: 51px; height: 52px; border: 2px solid #fff; border-radius: 3px; box-shadow: 0 1px 4px #0006; overflow: hidden; }
.zoom { position: absolute; right: 12px; top: 307px; width: 50px; height: 101px; background: #fff; border-radius: 2px; box-shadow: 0 1px 4px #0005; display: flex; flex-direction: column; align-items: center; justify-content: space-between; padding: 13px 0; }
.zoom hr { width: 37px; height: 1px; border: 0; margin: 0; background: #e6e6e6; }
.credits { position: absolute; right: 0; bottom: 0; height: 16px; display: flex; gap: 1px; font-size: 12.500px; line-height: 17px; color: #000; white-space: nowrap; }
.credits span { background: #f5f5f5b0; padding: 0 7px; }
.credits span:nth-child(1) { width: 122px; }
.credits span:nth-child(2) { width: 108px; }
.credits span:nth-child(3) { width: 49px; }
.credits span:nth-child(4) { width: 119px; }

/* feedback */
.feedback { display: flex; flex-direction: column; align-items: center; }
.feedback h2 { color: #f5b553; margin-top: 43px; height: 38px; }
.rate { margin: 26px 0 0; font-size: 25px; line-height: 30px; color: #919191; }
.stars { margin-top: 12px; height: 47px; font: 41px/47px "DejaVu Sans", sans-serif; letter-spacing: -3.300px; padding-right: 0; margin-left: 3px; color: #f5f5f5; }
.row { display: grid; grid-template-columns: 390px 391px; gap: 19px; margin-top: 27px; }
.hint { color: #919191; }

/* scrollbar */
.scrollbar { width: 15px; background: #f1f1f1; display: flex; flex-direction: column; align-items: center; }
.up { border: 4px solid transparent; border-bottom: 5px solid #505050; border-top: 0; margin: 6px 0 0; }
.thumb { margin-top: 311px; width: 12px; height: 360px; background: #c1c1c1; }
.down { border: 4px solid transparent; border-top: 5px solid #505050; border-bottom: 0; margin: auto 0 5px; }
```
